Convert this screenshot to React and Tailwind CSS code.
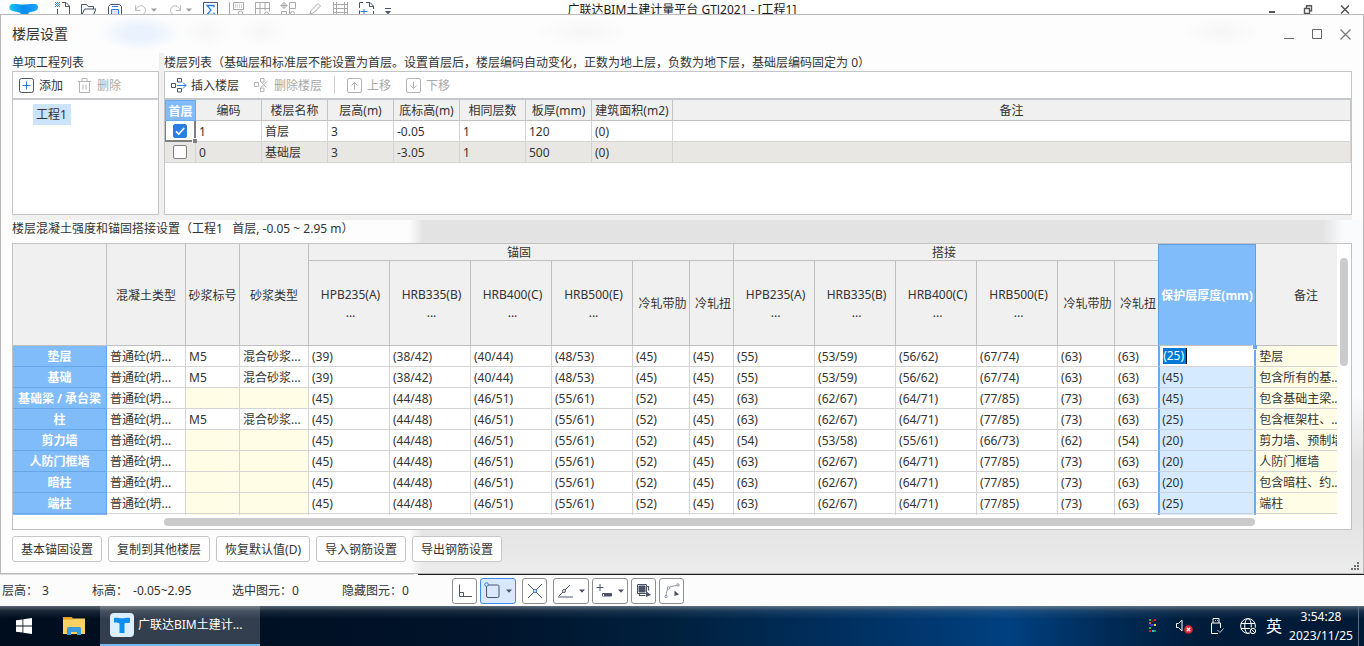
import React from "react";

const FLOOR_COLUMNS = ["编码", "楼层名称", "层高(m)", "底标高(m)", "相同层数", "板厚(mm)", "建筑面积(m2)", "备注"];

const FLOORS = [
  { first: true, cells: ["1", "首层", "3", "-0.05", "1", "120", "(0)", ""] },
  { first: false, cells: ["0", "基础层", "3", "-3.05", "1", "500", "(0)", ""] },
];

const STEEL = ["HPB235(A)", "HRB335(B)", "HRB400(C)", "HRB500(E)", "冷轧带肋", "冷轧扭"];

const A39 = ["(39)", "(38/42)", "(40/44)", "(48/53)", "(45)", "(45)"];
const A45 = ["(45)", "(44/48)", "(46/51)", "(55/61)", "(52)", "(45)"];
const L55 = ["(55)", "(53/59)", "(56/62)", "(67/74)", "(63)", "(63)"];
const L63 = ["(63)", "(62/67)", "(64/71)", "(77/85)", "(73)", "(63)"];
const L54 = ["(54)", "(53/58)", "(55/61)", "(66/73)", "(62)", "(54)"];

const MEMBERS = [
  { name: "垫层", mortar: true, anchor: A39, lap: L55, cover: "(25)", note: "垫层" },
  { name: "基础", mortar: true, anchor: A39, lap: L55, cover: "(45)", note: "包含所有的基..." },
  { name: "基础梁 / 承台梁", mortar: false, anchor: A45, lap: L63, cover: "(45)", note: "包含基础主梁..." },
  { name: "柱", mortar: true, anchor: A45, lap: L63, cover: "(25)", note: "包含框架柱、..." },
  { name: "剪力墙", mortar: false, anchor: A45, lap: L54, cover: "(20)", note: "剪力墙、预制墙" },
  { name: "人防门框墙", mortar: false, anchor: A45, lap: L63, cover: "(20)", note: "人防门框墙" },
  { name: "暗柱", mortar: false, anchor: A45, lap: L63, cover: "(20)", note: "包含暗柱、约..." },
  { name: "端柱", mortar: false, anchor: A45, lap: L63, cover: "(25)", note: "端柱" },
];

function Icon({ w = 16, h = 16, className = "", children }) {
  return (
    <svg width={w} height={h} viewBox={`0 0 ${w} ${h}`} fill="none" stroke="currentColor" className={`block shrink-0 ${className}`} aria-hidden="true">
      {children}
    </svg>
  );
}

function Caret({ className = "" }) {
  return (
    <Icon w={6} h={4} className={className}>
      <path d="M0 0.5h6L3 3.8z" fill="currentColor" stroke="none" />
    </Icon>
  );
}

function BrandMark() {
  return (
    <svg width="30" height="22" viewBox="0 0 30 22" className="block shrink-0" aria-hidden="true">
      <defs>
        <linearGradient id="brand" x1="0" y1="0" x2="1" y2="0">
          <stop offset="0" stopColor="#19c3f5" />
          <stop offset="0.5" stopColor="#0a8cf0" />
          <stop offset="1" stopColor="#1ba6fb" />
        </linearGradient>
      </defs>
      <path d="M3 0c5-1 7 1 12 .6C20 .4 24-.6 27 .2c2.5 1 2.600 4.500.4 6C25 8 21 7.500 19.500 9v11h-8V9C9 7.500 5 8 2.500 6.500-.6 5 0 1 3 0z" fill="url(#brand)" />
    </svg>
  );
}

function TopBar() {
  const b = "flex h-4 items-start gap-[3px]";
  return (
    <header className="relative flex h-[14px] items-start overflow-hidden bg-white pl-[9px]">
      <div className="pt-[4px]"><BrandMark /></div>
      <nav className="ml-[15px] flex items-start gap-[10px] pt-[2px] text-[#4a5368]" aria-label="快速访问">
        <button className={b} aria-label="新建">
          <Icon>
            <path d="M8 .5h4l3.500 3.500v12h-12V7" />
            <path d="M11.500.5v4h4" />
            <path d="M1 0h1v1h-1zM3 0h1v1h-1zM5 0h1v1h-1zM2 1h1v1h-1zM4 1h1v1h-1zM1 2h1v1h-1zM3 2h1v1h-1zM5 2h1v1h-1zM2 3h1v1h-1zM4 3h1v1h-1zM1 4h1v1h-1zM3 4h1v1h-1zM5 4h1v1h-1z" fill="#2a7de1" stroke="none" />
          </Icon>
        </button>
        <button className={b} aria-label="打开">
          <Icon><path d="M1.500 14V2.500h5l1.500 2h5.500V7M1.500 14l3-7H16l-3 7z" /></Icon>
        </button>
        <button className={b} aria-label="保存">
          <Icon>
            <path d="M2.500 4.500l2-2h9l2 2v11h-13z" />
            <path d="M5.500 15V7.500h7V15" fill="#d9e8fc" stroke="#2a7de1" />
            <path d="M6 4.500h6" stroke="#2a7de1" />
          </Icon>
        </button>
        <button className={b} aria-label="撤销">
          <Icon className="text-[#b9b9b9]"><path d="M3.500 3.500v5h5M3.500 8.500C6 3 10 3 12 5c2.500 2.500 1.500 6-1 7.500" /></Icon>
          <Caret className="mt-[6px] text-[#9d9d9d]" />
        </button>
        <button className={b} aria-label="重做">
          <Icon className="text-[#b9b9b9]"><path d="M13.500 3.500v5h-5M13.500 8.500C11 3 7 3 5 5c-2.500 2.500-1.500 6 1 7.500" /></Icon>
          <Caret className="mt-[6px] text-[#9d9d9d]" />
        </button>
        <button className={b} aria-label="汇总计算">
          <Icon>
            <path d="M1.500.5h14v15h-14z" />
            <path d="M12 5.500V3.500H5l4 4.500-4 4.500h7v-2" stroke="#2a7de1" strokeWidth="1.300" />
          </Icon>
        </button>
        <button className={b} aria-label="查看工程量">
          <Icon className="text-[#a9a9a9]"><path d="M1.500 0v12.500h5M5.500.5h10v7h-10z" /><path d="M7 3h1m1 0h1m1 0h1m1 0h1M7 5h1m1 0h1m1 0h1m1 0h1" /><circle cx="12.500" cy="11" r="2" /></Icon>
        </button>
        <button className={b} aria-label="查看报表">
          <Icon className="text-[#a9a9a9]"><path d="M1.500.5h14v9M1.500.5v12h7M1.500 6.500h14M6 .5v12M11 .5v8" /><circle cx="12.500" cy="12" r="2" /></Icon>
        </button>
        <button className={b} aria-label="构件">
          <Icon className="text-[#a9a9a9]"><path d="M9.500.5h6v6h-6zM4 .5v6M1 3.500h6M4 .5L1 3.500l3 3 3-3zM1.500 9.500h5v5h-5zM9.500 7v8" /><circle cx="12.500" cy="11.500" r="2" /></Icon>
        </button>
        <button className={b} aria-label="编辑">
          <Icon className="text-[#a9a9a9]"><path d="M4 12l1-3.500 7-7 2.500 2.500-7 7zM1 12.500h2" /></Icon>
        </button>
        <button className={b} aria-label="钢筋">
          <Icon className="text-[#a9a9a9]"><path d="M1.500 0v14M4.500 0v14M12.500 0v14M15.500 0v14M1 2.500h14M1 6.500h14M1 10.500h14" /></Icon>
        </button>
        <button className={b} aria-label="识别">
          <Icon><path d="M1.500 6V.5H5M8 .5h4l3.500 3.500V7M1.500 8.500v4M15.500 9v4M11.500.5v4h4" /><path d="M6 7v6M2.500 9.500h7" stroke="#2a7de1" /></Icon>
        </button>
        <button className={b} aria-label="自定义">
          <Icon w={8} h={14}><path d="M1 6.500h6" /><path d="M1 9h6l-3 3.500z" fill="currentColor" stroke="none" /></Icon>
        </button>
      </nav>
      <h1 className="pointer-events-none absolute inset-x-0 top-[2px] text-center leading-[16px] text-[#1a1a1a]">广联达BIM土建计量平台 GTJ2021 - [工程1]</h1>
      <div className="ml-auto flex items-start gap-[27px] pr-[14px] pt-[5px] text-[#555]">
        <button aria-label="主窗口最小化"><Icon w={8} h={9}><path d="M1 7h6" strokeWidth="2" /></Icon></button>
        <button aria-label="主窗口还原"><Icon w={10} h={9}><path d="M1.500 3.500h5v5h-5zM3.500 3V.8h5v5H7" strokeWidth="1.400" /></Icon></button>
        <button aria-label="主窗口关闭"><Icon w={10} h={9}><path d="M1 .5l8 8M9 .5l-8 8" strokeWidth="1.500" /></Icon></button>
      </div>
    </header>
  );
}

function DialogTitle() {
  return (
    <div className="flex h-[38px] items-center justify-between pr-[1px] [background:radial-gradient(closest-side,#eaf3fd_40%,transparent)_86px_0/84px_36px_no-repeat,radial-gradient(closest-side,#f6f6f6,transparent)_170px_2px/50px_30px_no-repeat,radial-gradient(closest-side,#f6f6f6,transparent)_225px_2px/50px_30px_no-repeat,radial-gradient(closest-side,#f6f6f6,transparent)_520px_2px/100px_30px_no-repeat,radial-gradient(closest-side,#f6f6f6,transparent)_1170px_2px/80px_30px_no-repeat]">
      <h2 className="text-[14px] leading-[20px] text-[#333]">楼层设置</h2>
      <div className="flex items-center gap-[17px] text-[#666]">
        <button aria-label="最小化"><Icon w={11} h={11}><path d="M0 9.500h10" /></Icon></button>
        <button aria-label="最大化"><Icon w={11} h={11}><path d="M.5.5h9v9h-9z" /></Icon></button>
        <button aria-label="关闭" className="text-[#777]"><Icon w={11} h={11}><path d="M.5.5l10 10M10.500.5l-10 10" strokeWidth="1.200" /></Icon></button>
      </div>
    </div>
  );
}

function ProjectPanel() {
  return (
    <section className="flex w-[147px] shrink-0 flex-col">
      <h3 className="h-[18px] leading-[20px]">单项工程列表</h3>
      <div className="flex h-[144px] flex-col border border-[#c3c5c8] bg-white">
        <div className="flex h-[28px] items-center border-b-2 border-[#c8cacd] pl-[6px]">
          <button className="flex items-center gap-[5px]">
            <Icon w={15} h={15} className="text-[#4a5368]">
              <rect x=".5" y=".5" width="14" height="14" rx="2" />
              <path d="M7.500 3.500v8M3.500 7.500h8" stroke="#2a7de1" />
            </Icon>
            <span className="pt-[2px]">添加</span>
          </button>
          <button className="ml-[15px] flex items-center gap-[6px] text-[#a8a8a8]" disabled>
            <Icon w={13} h={15} className="text-[#b4b4b4]">
              <path d="M0 3.500h13M4 3V.5h5V3M1.500 3.500v11h10v-11M5 6.500v5M8 6.500v5" />
            </Icon>
            <span className="pt-[2px]">删除</span>
          </button>
        </div>
        <ul className="pl-[20px] pt-[4px]">
          <li className="w-[38px] bg-[#cce3fc] pl-[3px] leading-[21px]">工程1</li>
        </ul>
      </div>
    </section>
  );
}

function FloorPanel() {
  const th = "h-[21px] border-b border-r border-[#c3c3c3] px-0 pb-0 pt-[2px] text-center font-normal";
  const td = "h-[21px] border-b border-r border-[#d4d4d4] pb-0 pl-[3px] pr-0 pt-[2px]";
  return (
    <section className="flex min-w-0 flex-1 flex-col">
      <h3 className="h-[18px] whitespace-nowrap leading-[20px]">楼层列表（基础层和标准层不能设置为首层。设置首层后，楼层编码自动变化，正数为地上层，负数为地下层，基础层编码固定为 0）</h3>
      <div className="flex h-[144px] flex-col border border-[#c3c5c8] bg-white">
        <div className="flex h-[28px] shrink-0 items-center border-b-2 border-[#c3c6ca] pl-[6px]">
          <button className="flex items-center gap-[4px]">
            <Icon className="text-[#4a5368]">
              <path d="M.5 6.500h4v4h-4zM6.500 1.500h4v3.500h-4zM6.500 11.500h4V15h-4z" />
              <path d="M6 8.500h9M12 5.500l3 3-3 3" stroke="#2a7de1" />
            </Icon>
            <span className="pt-[2px]">插入楼层</span>
          </button>
          <button className="ml-[15px] flex items-center gap-[5px] text-[#a8a8a8]" disabled>
            <Icon w={15} className="text-[#b4b4b4]">
              <path d="M.5 5.500h4v4h-4zM6.500 1.500h3.500V5H6.500zM6.500 11h3.500v3.500H6.500z" />
              <path d="M7.500 5.500l5 5M13 4.500l-6 6" />
            </Icon>
            <span className="pt-[2px]">删除楼层</span>
          </button>
          <span className="ml-[12px] h-[18px] w-px bg-[#d0d0d0]" />
          <button className="ml-[12px] flex items-center gap-[5px] text-[#a8a8a8]" disabled>
            <Icon w={15} h={15} className="text-[#b4b4b4]">
              <rect x=".5" y=".5" width="14" height="14" rx="1.500" />
              <path d="M7.500 11.500v-7M4.500 7.500l3-3 3 3" />
            </Icon>
            <span className="pt-[2px]">上移</span>
          </button>
          <button className="ml-[15px] flex items-center gap-[5px] text-[#a8a8a8]" disabled>
            <Icon w={15} h={15} className="text-[#b4b4b4]">
              <rect x=".5" y=".5" width="14" height="14" rx="1.500" />
              <path d="M7.500 3.500v7M4.500 7.500l3 3 3-3" />
            </Icon>
            <span className="pt-[2px]">下移</span>
          </button>
        </div>
        <table className="w-full table-fixed border-separate border-spacing-0">
          <colgroup>
            <col className="w-[31px]" />
            {[0, 1, 2, 3, 4, 5].map((i) => <col key={i} className="w-[66px]" />)}
            <col className="w-[81px]" />
            <col />
          </colgroup>
          <thead>
            <tr className="bg-[#f0f0f0]">
              <th className="h-[21px] border border-[#6aa9ea] bg-[#80bbfa] px-0 pb-0 pt-[2px] text-center font-bold text-white">首层</th>
              {FLOOR_COLUMNS.map((c) => <th key={c} className={th}>{c}</th>)}
            </tr>
          </thead>
          <tbody>
            {FLOORS.map((f) => (
              <tr key={f.cells[1]} className={f.first ? "bg-white" : "bg-[#e8e7e4]"}>
                <td className={f.first ? "relative h-[21px] border-2 border-l border-t-0 border-[#7f7f7f] p-0" : "relative h-[21px] border-b border-r border-[#d4d4d4] p-0"}>
                  <span className="relative mx-auto block size-[14px]">
                    <input type="checkbox" defaultChecked={f.first} aria-label={f.cells[1] + "设为首层"} className="peer block size-[14px] appearance-none rounded-[2px] border border-[#808080] bg-white checked:border-[#2a7de1] checked:bg-[#2a7de1]" />
                    <svg width="14" height="14" viewBox="0 0 14 14" fill="none" stroke="#fff" strokeWidth="1.600" className="pointer-events-none absolute inset-0 hidden peer-checked:block" aria-hidden="true">
                      <path d="M3 7.300l2.800 2.700L11.200 4" />
                    </svg>
                  </span>
                  {f.first && <span className="absolute -bottom-[3px] -right-[3px] z-10 size-[5px] border-l border-t border-white bg-[#7f7f7f]" />}
                </td>
                {f.cells.map((c, i) => <td key={i} className={td}>{c}</td>)}
              </tr>
            ))}
          </tbody>
        </table>
      </div>
    </section>
  );
}

function MemberTable() {
  const th = "border-b border-r border-[#c0c0c0] pt-[2px] pb-0 pr-0 text-center font-normal whitespace-nowrap overflow-hidden";
  const td = "h-[21px] border-b border-[#d4d4d4] pb-0 pl-[3px] pr-0 pt-[2px] whitespace-nowrap overflow-hidden";
  const rowHead = "h-[21px] border-b border-r border-[#66a5e8] bg-[#80bbfa] px-0 pb-0 pt-[2px] text-center font-bold text-white whitespace-nowrap";
  const steelCols = ["w-[81px]", "w-[81px]", "w-[81px]", "w-[81px]", "w-[57px]"];
  return (
    <table className="w-[calc(100%+20px)] table-fixed border-separate border-spacing-0 bg-white">
      <colgroup>
        <col className="w-[94px]" />
        <col className="w-[79px]" />
        <col className="w-[54px]" />
        <col className="w-[69px]" />
        {steelCols.map((w, i) => <col key={i} className={w} />)}
        <col className="w-[44px]" />
        {steelCols.map((w, i) => <col key={i} className={w} />)}
        <col className="w-[43px]" />
        <col className="w-[98px]" />
        <col />
      </colgroup>
      <thead className="bg-[#f0f0f0]">
        <tr>
          <th rowSpan={2} className={th + " pl-0"}></th>
          <th rowSpan={2} className={th + " pl-0"}>混凝土类型</th>
          <th rowSpan={2} className={th + " pl-0"}>砂浆标号</th>
          <th rowSpan={2} className={th + " pl-0"}>砂浆类型</th>
          <th colSpan={6} className="h-[17px] border-b border-r border-[#c0c0c0] py-0 pl-0 pr-[4px] pt-px text-center font-normal leading-[15px]">锚固</th>
          <th colSpan={6} className="h-[17px] border-b border-[#c0c0c0] py-0 pl-0 pr-[4px] pt-px text-center font-normal leading-[15px]">搭接</th>
          <th rowSpan={2} className="border-x border-b border-t border-x-[#5f9fe4] border-b-[#c0c0c0] border-t-[#5f9fe4] bg-[#80bbfa] px-0 pb-0 pt-[2px] text-center font-bold whitespace-nowrap text-white">保护层厚度(mm)</th>
          <th rowSpan={2} className={th + " pl-0"}>备注</th>
        </tr>
        <tr>
          {[0, 1].map((g) =>
            STEEL.map((s, i) => (
              <th key={g + s} className={th + (g === 1 && i === 5 ? " border-r-0" : "") + " h-[85px] pl-[3px] leading-[18px]"}>
                {s}
                {i < 4 && <><br />...</>}
              </th>
            ))
          )}
        </tr>
      </thead>
      <tbody>
        {MEMBERS.map((m, r) => (
          <tr key={m.name}>
            <th scope="row" className={rowHead}>{m.name}</th>
            <td className={td + " border-r"}>普通砼(坍...</td>
            <td className={m.mortar ? td + " border-r" : td + " border-r bg-[#fffde6]"}>{m.mortar ? "M5" : ""}</td>
            <td className={m.mortar ? td + " border-r" : td + " border-r bg-[#fffde6]"}>{m.mortar ? "混合砂浆..." : ""}</td>
            {[...m.anchor, ...m.lap].map((v, i) => <td key={i} className={i === 11 ? td : td + " border-r"}>{v}</td>)}
            {r === 0 ? (
              <td className="relative h-[21px] border-x-2 border-b border-x-[#6aa9ea] border-b-[#d4d4d4] bg-white py-0 pl-[3px] pr-0">
                <input defaultValue={m.cover} aria-label="保护层厚度" className="block h-[16px] w-[24px] border-r border-black bg-[#0078d7] p-0 text-white outline-none" />
                <span className="absolute -right-[3px] -top-[1px] z-10 size-[5px] border-b border-l border-white bg-[#6aa9ea]" />
              </td>
            ) : (
              <td className="h-[21px] border-x-2 border-b border-x-[#6aa9ea] border-b-[#c9d3de] bg-[#d6eaff] pb-0 pl-[2px] pr-0 pt-[2px]">{m.cover}</td>
            )}
            <td className={td + " border-r bg-[#fffde6]"}>{m.note}</td>
          </tr>
        ))}
        <tr>
          <th className="h-px border-r border-[#66a5e8] bg-[#80bbfa] p-0"></th>
          {Array.from({ length: 15 }, (_, i) => (
            <td key={i} className={i === 1 || i === 2 ? "border-r border-[#d4d4d4] bg-[#fffde6] p-0" : "border-r border-[#d4d4d4] p-0"}></td>
          ))}
          <td className="border-x-2 border-[#6aa9ea] bg-[#d6eaff] p-0"></td>
          <td className="bg-[#fffde6] p-0"></td>
        </tr>
      </tbody>
    </table>
  );
}

function SettingsSection() {
  return (
    <section className="-mx-[11px] flex-1 px-[11px] [background:linear-gradient(to_right,#fdfdfd_0,#fdfdfd_408px,transparent_422px),linear-gradient(to_right,transparent,#fafbfd_50%)_right_top/40px_23px_no-repeat,linear-gradient(to_bottom,#fafbfd_150px,transparent_220px)_right_23px/12px_220px_no-repeat,linear-gradient(to_bottom,#e3e3e3_85%,#ececec)]">
      <h3 className="h-[23px] leading-[18px] whitespace-pre">楼层混凝土强度和锚固搭接设置（工程1   首层, -0.05 ~ 2.95 m）</h3>
      <div className="border border-[#c3c3c3] bg-white">
        <div className="flex">
          <div className="min-w-0 flex-1 overflow-hidden">
            <MemberTable />
          </div>
          <div className="w-[14px] shrink-0 pl-[3px] pt-[14px]">
            <div className="h-[108px] w-[8px] rounded-full bg-[#cbcbcb]" />
          </div>
        </div>
        <div className="h-[14px] pl-[151px] pr-[96px] pt-[3px]">
          <div className="h-[8px] rounded-full bg-[#cbcbcb]" />
        </div>
      </div>
      <div className="flex items-end justify-between pt-[6px]">
        <div className="flex gap-[6px] pb-[11px]">
          {["基本锚固设置", "复制到其他楼层", "恢复默认值(D)", "导入钢筋设置", "导出钢筋设置"].map((t) => (
            <button key={t} className="h-[26px] rounded-[3px] border border-[#c6c6c6] bg-white px-[8px] pt-px whitespace-nowrap">{t}</button>
          ))}
        </div>
        <Icon w={9} h={9} className="-mr-[8px] mb-[2px] text-[#6b6f78]">
          <path d="M6 1h2M3 4h2M6 4h2M0 7h2M3 7h2M6 7h2" strokeWidth="2" />
        </Icon>
      </div>
    </section>
  );
}

function StatusBar() {
  const box = "flex h-[26px] w-[25px] items-center justify-center rounded-[3px] border border-[#8f8f8f] bg-white";
  const wide = "flex h-[26px] w-[36px] items-center justify-between rounded-[3px] border border-[#8f8f8f] bg-white pl-[3px] pr-[3px]";
  return (
    <div>
      <div className="h-px [background:linear-gradient(to_right,#dcdcdc_414px,#fff_414px,#fff_418px,#1c1c1c_418px)]" />
      <div className="flex h-[31px] items-center bg-[#fcfcfc] pl-[2px]">
        <dl className="flex shrink-0 whitespace-nowrap">
          <div className="flex w-[90px] gap-[4px]"><dt>层高：</dt><dd>3</dd></div>
          <div className="flex w-[140px] gap-[5px]"><dt>标高：</dt><dd>-0.05~2.95</dd></div>
          <div className="flex w-[110px]"><dt>选中图元：</dt><dd>0</dd></div>
          <div className="flex w-[110px]"><dt>隐藏图元：</dt><dd>0</dd></div>
        </dl>
        <div className="flex shrink-0 gap-[3px] text-[#4a5368]">
          <button className={box} aria-label="正交"><Icon><path d="M2.500 1.500v12H15M2.500 9.500h4v4" /></Icon></button>
          <button className="flex h-[26px] w-[36px] items-center justify-between rounded-[3px] border border-[#3d8be8] bg-[#d9e8fc] pl-[3px] pr-[3px]" aria-label="对象捕捉">
            <Icon w={17} h={17}><rect x="2.500" y="3" width="12.500" height="12.500" rx="1.500" /><circle cx="2.500" cy="2.500" r="1.800" fill="#d9e8fc" stroke="#2a7de1" /></Icon>
            <Caret />
          </button>
          <button className={box + " ml-[3px]"} aria-label="交点"><Icon><path d="M1 1l14 14M15 1L1 15" /><circle cx="8" cy="8" r="1.500" fill="#fff" stroke="#2a7de1" /></Icon></button>
          <button className={wide + " ml-[3px]"} aria-label="垂点"><Icon w={17}><path d="M2 13L13 2" /><circle cx="7" cy="8" r="1.500" fill="#fff" /><path d="M1 14h15" stroke="#a5abb8" strokeWidth="2" /></Icon><Caret /></button>
          <button className={wide} aria-label="动态输入"><Icon w={17}><path d="M4 1v7M.5 4.500h7" /><path d="M6.500 10.500h9v2.500h-9z" fill="currentColor" /><path d="M7.500 11v2" stroke="#fff" /></Icon><Caret /></button>
          <button className={box} aria-label="选择"><Icon><path d="M1.500 1.500h9v9h-9z" /><path d="M3 3h6v6H3z" fill="currentColor" /><path d="M11 3.500h1.500v4M3.500 11v1.500h6" strokeWidth="1.200" /><path d="M10 8l5 4-5 2z" fill="currentColor" stroke="none" /></Icon></button>
          <button className={box} aria-label="折线"><Icon><path d="M2 13C2.500 9 3 6.500 4.500 5S9 3 13 2.500" stroke="#8a90a0" /><g stroke="#8a90a0" fill="#fff"><circle cx="2" cy="13.500" r="1.200" /><circle cx="4.500" cy="5" r="1.200" /><circle cx="14" cy="2" r="1.200" /></g><path d="M10.500 7.500l4.500 4-4.500 1.500z" fill="currentColor" stroke="none" /></Icon></button>
        </div>
      </div>
    </div>
  );
}

function Taskbar() {
  return (
    <footer className="flex h-[40px] items-stretch text-white [background:linear-gradient(to_bottom,rgba(150,160,165,0.6),rgba(120,135,150,0.2)_5px,transparent_13px),linear-gradient(to_right,#000d1d_0,#00132a_35%,#00213f_50%,#003060_62%,#004080_74%,#002c58_81%,#001c3a_88%,#001a36_100%)]">
      <button className="flex w-[48px] items-center justify-center" aria-label="开始">
        <svg width="16" height="16" viewBox="0 0 16 16" fill="#fff" aria-hidden="true"><path d="M0 2.300L6.500 1.400v6.200H0zM7.300 1.300L16 0v7.600H7.300zM0 8.400h6.500v6.200L0 13.700zM7.300 8.400H16V16l-8.700-1.200z" /></svg>
      </button>
      <button className="flex w-[52px] items-center justify-center" aria-label="文件资源管理器">
        <svg width="22" height="18" viewBox="0 0 22 18" aria-hidden="true">
          <path d="M0 1.500h22V17H0z" fill="#fbd161" /><path d="M0 0h9l1 2.500H0z" fill="#e6a21a" />
          <path d="M4 18v-6.500a1.500 1.500 0 0 1 1.500-1.500h11a1.500 1.500 0 0 1 1.500 1.500V18h-4v-3H8v3z" fill="#3c9bdc" />
        </svg>
      </button>
      <button className="flex w-[160px] items-center gap-[4px] border-b-2 border-[#76b9ed] bg-white/20 pl-[10px]">
        <svg width="24" height="24" viewBox="0 0 24 24" className="shrink-0" aria-hidden="true">
          <rect width="24" height="24" rx="4" fill="#dcefff" />
          <path d="M4 5c3-.8 5 .4 8 .3s5-1 8-.3v4.500c-2 .8-4 .2-5.500 1V20h-5v-9.500C8 9.700 6 10.300 4 9.500z" fill="#0d8ff0" />
        </svg>
        广联达BIM土建计...
      </button>
      <div className="ml-auto flex items-center">
        <svg width="8" height="14" viewBox="0 0 8 14" aria-hidden="true">
          <path d="M0 0h2v2H0zM0 8h2v2H0z" fill="#22b14c" /><path d="M5 0h2v2H5zM0 11h2v2H0z" fill="#e02020" /><path d="M0 3h2v2H0z" fill="#d9601f" /><path d="M1 5h5v2H1z" fill="#3a35e0" /><path d="M5 5h2v2H5z" fill="#e8d820" /><path d="M3 11h2v2H3z" fill="#35b5e8" /><path d="M5 11h2v2H5z" fill="#1f9e50" /><path d="M3 1h2v2H3z" fill="#5b2030" />
        </svg>
        <Icon w={17} h={16} className="ml-[19px]"><path d="M.5 5.500h2L6 2v11L2.500 9.500h-2z" /><circle cx="12.500" cy="11.500" r="4.300" fill="#e0242c" stroke="none" /><path d="M10.800 9.800l3.400 3.400M14.200 9.800l-3.400 3.400" strokeWidth="1.300" /></Icon>
        <Icon w={14} h={18} className="ml-[17px]"><path d="M3 6V1.500h6V6M1.500 6h9v5M1.500 6v10.500H8M5 3.500h.8M7 3.500h.8" /><path d="M7.500 13l2.500 2.500 3.500-4" stroke="#b9c6d6" /></Icon>
        <Icon w={17} h={17} className="ml-[16px]"><circle cx="8" cy="8" r="7.400" /><ellipse cx="8" cy="8" rx="3.300" ry="7.400" /><path d="M1 5.500h14M1 10.500h9" /><circle cx="13" cy="13" r="3.800" fill="#001a36" stroke="none" /><circle cx="13" cy="13" r="2.700" /><path d="M11 11l4 4" /></Icon>
        <span className="ml-[9px] text-[16px] leading-[20px]">英</span>
        <div className="ml-[6px] w-[66px] text-center leading-[19px]">
          <div>3:54:28</div>
          <div>2023/11/25</div>
        </div>
        <span className="ml-[4px] mr-[5px] h-[40px] w-px bg-[#5c6d80]" />
      </div>
    </footer>
  );
}

export default function App() {
  return (
    <div className="flex min-h-screen flex-col overflow-x-hidden bg-white text-[12px] leading-[16px] text-[#333] [font-family:'Noto_Sans','Noto_Sans_CJK_SC',sans-serif]">
      <TopBar />
      <main role="dialog" aria-label="楼层设置" className="flex flex-1 flex-col border border-[#b9b9b9] bg-[#fdfdfd] px-[11px]">
        <DialogTitle />
        <div className="flex gap-[5px] border-b-[5px] border-[#f0f0f0] [background:linear-gradient(#f0f0f0,#f0f0f0)_147px_0/5px_100%_no-repeat]">
          <ProjectPanel />
          <FloorPanel />
        </div>
        <SettingsSection />
      </main>
      <StatusBar />
      <Taskbar />
    </div>
  );
}
